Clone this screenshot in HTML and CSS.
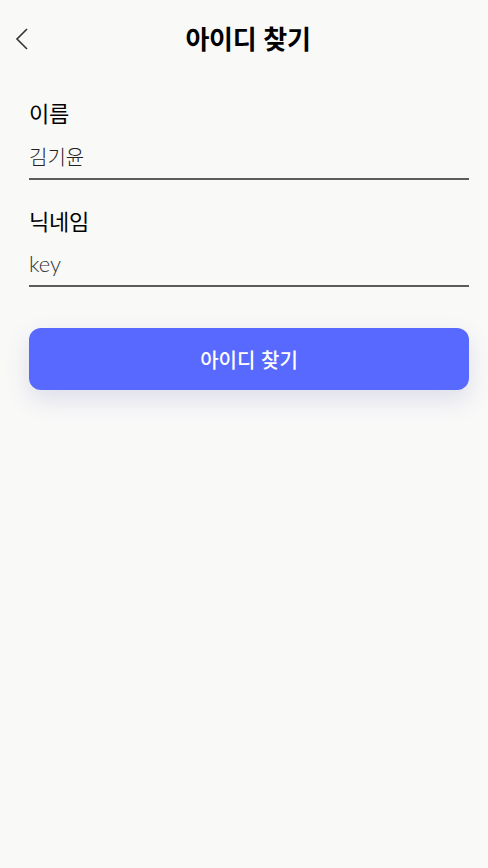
FILE: index.html
```html
<!DOCTYPE html>
<html lang="ko">
<head>
<meta charset="utf-8">
<link rel="stylesheet" href="styles.css">
</head>
<body>
<div class="page">
  <header class="topbar">
    <button class="back" aria-label="뒤로">
      <svg width="14" height="22" viewBox="0 0 14 22"><path d="M12 1 L2 11 L12 21" fill="none" stroke="#333" stroke-width="1.6"/></svg>
    </button>
    <h1 class="title">아이디 찾기</h1>
  </header>
  <main class="form">
    <div class="field">
      <label class="label">이름</label>
      <div class="input">김기윤</div>
    </div>
    <div class="field">
      <label class="label">닉네임</label>
      <div class="input latin">key</div>
    </div>
    <button class="submit">아이디 찾기</button>
  </main>
</div>
</body>
</html>
```
FILE: styles.css
```css
html, body { margin: 0; padding: 0; }
body {
  background: #f9f9f8;
  font-family: "Noto Sans CJK KR", "Noto Sans", sans-serif;
  color: #000;
  width: 488px;
  height: 868px;
}
.page { padding: 0 19px 0 29px; }
.topbar {
  position: relative;
  height: 76px;
  display: flex;
  align-items: center;
  justify-content: center;
  margin-left: -29px;
  margin-right: -19px;
}
.back {
  position: absolute;
  left: 14px;
  top: 28px;
  background: none;
  border: 0;
  padding: 0;
  width: 16px;
  height: 22px;
}
.title {
  margin: 0 0 0 8px;
  font-size: 26px;
  font-weight: 700;
  letter-spacing: -0.3px;
  line-height: 1;
}
.form { display: flex; flex-direction: column; padding-top: 22px; }
.field { display: flex; flex-direction: column; margin-bottom: 26px; }
.field + .field { margin-bottom: 41px; }
.label {
  font-size: 22px;
  font-weight: 400;
  line-height: 28px;
  letter-spacing: -0.3px;
}
.input {
  margin-top: 18px;
  font-size: 20px;
  font-weight: 300;
  line-height: 26px;
  color: #222;
  padding-bottom: 8px;
  border-bottom: 2px solid #5c5c5c;
}
.field + .field .input { margin-top: 17px; }
.input.latin { font-family: "Lato", "Noto Sans CJK KR", sans-serif; font-weight: 300; color: #333; font-size: 22px; }
.submit {
  height: 62px;
  border: 0;
  border-radius: 12px;
  background: #5769ff;
  color: #fff;
  font-family: "Noto Sans CJK KR", sans-serif;
  font-size: 20px;
  font-weight: 500;
  box-shadow: 0 10px 24px rgba(80, 90, 170, 0.16);
}
```
